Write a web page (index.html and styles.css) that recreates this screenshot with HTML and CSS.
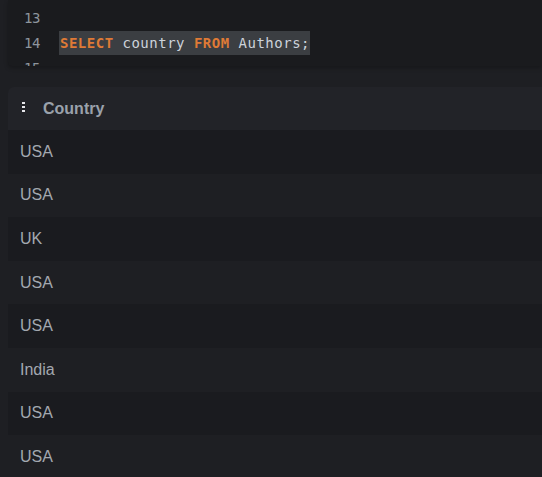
FILE: index.html
```html
<!DOCTYPE html>
<html>
<head>
<meta charset="utf-8">
<link rel="stylesheet" href="styles.css">
</head>
<body>
<div class="editor">
  <div class="line"><span class="ln">13</span><span class="code"></span></div>
  <div class="line"><span class="ln">14</span><span class="code sel"><span class="kw">SELECT</span> country <span class="kw">FROM</span> Authors;</span></div>
  <div class="line"><span class="ln">15</span><span class="code"></span></div>
</div>
<div class="table">
  <div class="thead">
    <span class="handle"><i></i><i></i><i></i></span>
    <span class="th">Country</span>
  </div>
  <div class="row">USA</div>
  <div class="row">USA</div>
  <div class="row">UK</div>
  <div class="row">USA</div>
  <div class="row">USA</div>
  <div class="row">India</div>
  <div class="row">USA</div>
  <div class="row">USA</div>
</div>
</body>
</html>
```
FILE: styles.css
```css
html, body {
  margin: 0;
  padding: 0;
}
body {
  background: #1e1f23;
  width: 542px;
  height: 477px;
  overflow: hidden;
  font-family: "Liberation Sans", Arial, sans-serif;
}
.editor {
  margin-left: 8px;
  height: 66px;
  box-sizing: border-box;
  padding-top: 6px;
  background: #1a1b1e;
  overflow: hidden;
  border-bottom-left-radius: 4px;
  box-shadow: 0 2px 4px rgba(0,0,0,0.25);
  font-family: "DejaVu Sans Mono", monospace;
}
.line {
  display: flex;
  height: 25px;
  line-height: 25px;
  align-items: flex-start;
}
.ln {
  width: 16px;
  margin-left: 16px;
  margin-right: 19px;
  font-size: 14px;
  letter-spacing: -0.4px;
  color: #8e959d;
}
.code {
  font-size: 14px;
  letter-spacing: 0.5px;
  color: #cdd3db;
  white-space: pre;
}
.code.sel {
  background: #3b3e42;
  line-height: 24px;
  height: 24px;
  padding: 0 0 0 1px;
}
.kw {
  color: #df7a36;
  font-weight: bold;
}
.table {
  margin-top: 21px;
  margin-left: 8px;
  border-top-left-radius: 6px;
  overflow: hidden;
}
.thead {
  height: 43px;
  background: #222328;
  display: flex;
  align-items: center;
}
.handle {
  display: flex;
  flex-direction: column;
  gap: 2px;
  margin-left: 14px;
  margin-right: 18px;
  margin-top: -3px;
}
.handle i {
  display: block;
  width: 3px;
  height: 2px;
  background: #e6e6ea;
}
.th {
  font-size: 16px;
  font-weight: bold;
  color: #9aa1ab;
}
.row {
  height: 43.6px;
  box-sizing: border-box;
  display: flex;
  align-items: center;
  padding-left: 12px;
  font-size: 16px;
  color: #a3a8b0;
}
.row:nth-child(even) {
  background: #1a1b1f;
}
.row:nth-child(odd) {
  background: #1e1f23;
}
```
